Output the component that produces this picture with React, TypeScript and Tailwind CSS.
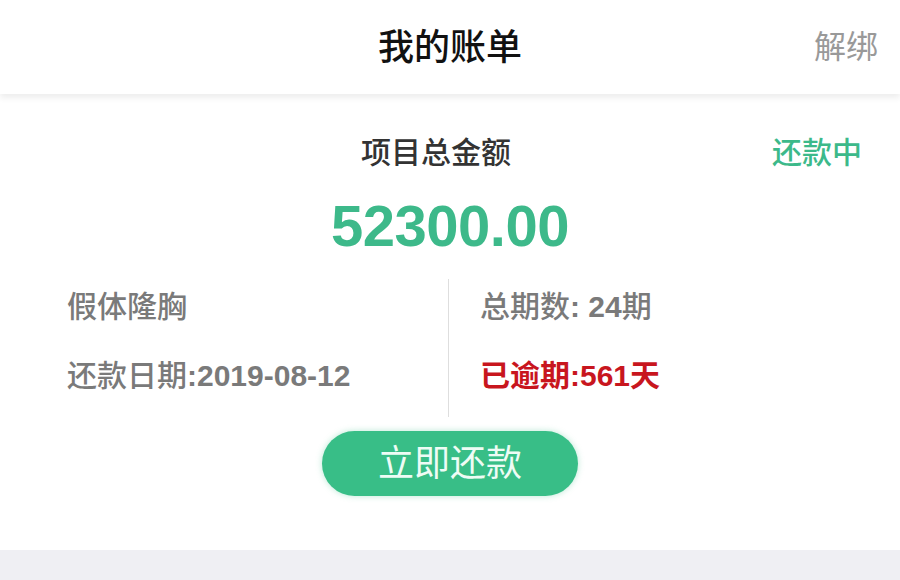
import React from "react";

const font = {
  fontFamily: '"Liberation Sans", "Noto Sans CJK SC", sans-serif',
};

export default function App() {
  return (
    <div className="flex h-[580px] w-[900px] flex-col overflow-hidden bg-white" style={font}>
      {/* header */}
      <header className="relative z-10 flex h-[94px] shrink-0 items-center justify-center bg-white shadow-[0_4px_6px_rgba(0,0,0,0.07)]">
        <h1 className="mt-[2px] text-[36px] font-medium leading-none text-[#111]">我的账单</h1>
        <span className="absolute right-[22px] top-[31px] text-[32px] leading-none text-[#999]">解绑</span>
      </header>

      {/* bill card */}
      <main className="flex flex-1 flex-col items-center bg-white">
        <div className="relative mt-[44px] flex w-full justify-center">
          <span className="mr-[28px] text-[30px] font-medium leading-none text-[#333]">项目总金额</span>
          <span className="absolute right-[38px] top-0 text-[30px] font-medium leading-none text-[#3cb98a]">还款中</span>
        </div>

        <div className="mt-[29px] text-[58px] font-bold leading-none tracking-[-0.5px] text-[#3db98a]">
          52300.00
        </div>

        <div className="mt-[24px] flex h-[138px] w-full">
          <div className="flex w-[449px] flex-col border-r border-[#dedede] pl-[67px] pt-[13px] text-[#7a7a7a]">
            <span className="text-[30px] font-medium leading-none">假体隆胸</span>
            <span className="mt-[39px] text-[30px] font-medium leading-none">
              还款日期<span className="font-bold">:2019-08-12</span>
            </span>
          </div>
          <div className="flex flex-col pl-[31px] pt-[13px]">
            <span className="text-[30px] font-medium leading-none text-[#7a7a7a]">
              总期数<span className="font-bold">: 24</span>期
            </span>
            <span className="mt-[39px] text-[30px] font-bold leading-none text-[#c8161e]">已逾期:561天</span>
          </div>
        </div>

        <button className="mt-[14px] flex h-[65px] w-[256px] items-center justify-center rounded-full bg-[#38be87] text-[36px] leading-none text-[#eefcf5] shadow-[0_0_6px_rgba(56,190,135,0.35)]">
          立即还款
        </button>
      </main>

      <footer className="h-[30px] shrink-0 bg-[#efeff3]" />
    </div>
  );
}
